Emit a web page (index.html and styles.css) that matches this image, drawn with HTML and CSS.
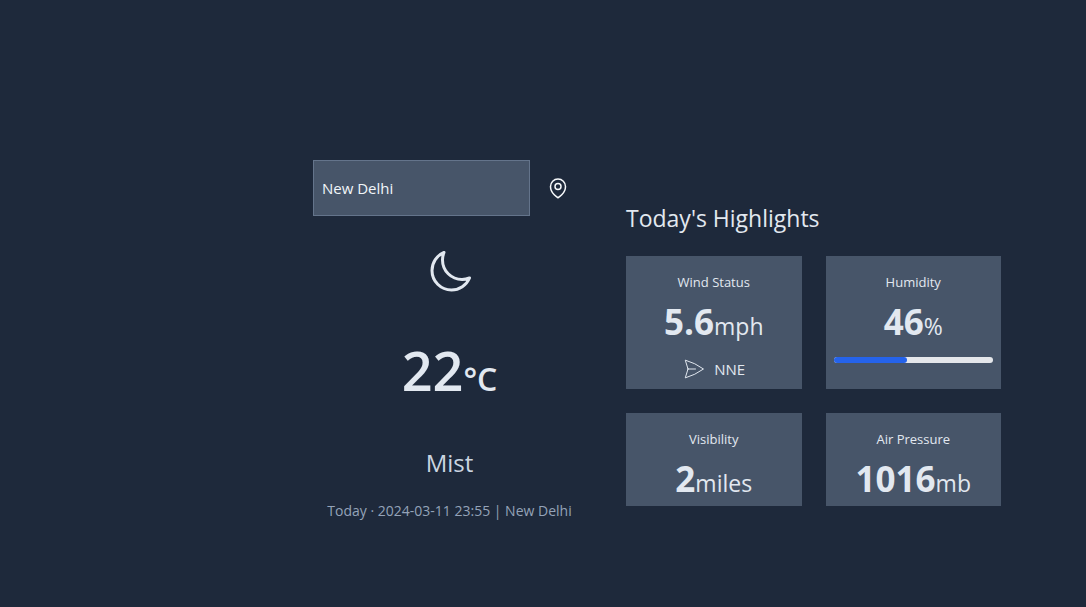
FILE: index.html
```html
<!DOCTYPE html>
<html lang="en">
<head>
<meta charset="utf-8">
<meta name="viewport" content="width=device-width, initial-scale=1">
<title>Weather</title>
<link rel="stylesheet" href="styles.css">
</head>
<body>
<main class="weather">
  <section class="current">
    <form class="search">
      <input class="search-input" type="text" aria-label="City" value="New Delhi">
      <button class="locate" type="button" aria-label="Use my location">
        <svg class="icon" viewBox="0 0 24 24" stroke-width="1.5"><path d="M15 10.5a3 3 0 1 1-6 0 3 3 0 0 1 6 0Z"/><path d="M19.5 10.5c0 7.142-7.5 11.25-7.5 11.25S4.5 17.642 4.5 10.5a7.5 7.5 0 1 1 15 0Z"/></svg>
      </button>
    </form>
    <svg class="icon icon-large" viewBox="0 0 24 24" stroke-width="1.5"><path d="M21.752 15.002A9.72 9.72 0 0 1 18 15.75c-5.385 0-9.75-4.365-9.75-9.75 0-1.33.266-2.597.748-3.752A9.753 9.753 0 0 0 3 11.25C3 16.635 7.365 21 12.75 21a9.753 9.753 0 0 0 9.002-5.998Z"/></svg>
    <p class="temperature">22<span class="degree">°C</span></p>
    <p class="condition">Mist</p>
    <p class="date">Today · 2024-03-11 23:55 | New Delhi</p>
  </section>
  <section class="highlights">
    <h1 class="title">Today's Highlights</h1>
    <div class="cards">
      <article class="card">
        <h2 class="label">Wind Status</h2>
        <p class="value">5.6<span class="unit">mph</span></p>
        <p class="wind">
          <svg class="icon" viewBox="0 0 24 24" stroke-width="1"><path d="M6 12 3.269 3.125A59.769 59.769 0 0 1 21.485 12 59.768 59.768 0 0 1 3.27 20.875L5.999 12Zm0 0h7.5"/></svg>
          <span>NNE</span>
        </p>
      </article>
      <article class="card">
        <h2 class="label">Humidity</h2>
        <p class="value">46<span class="unit">%</span></p>
        <div class="meter"><div class="meter-fill" style="width: 46%"></div></div>
      </article>
      <article class="card">
        <h2 class="label">Visibility</h2>
        <p class="value">2<span class="unit">miles</span></p>
      </article>
      <article class="card">
        <h2 class="label">Air Pressure</h2>
        <p class="value">1016<span class="unit">mb</span></p>
      </article>
    </div>
  </section>
</main>
</body>
</html>
```
FILE: styles.css
```css
* {
  box-sizing: border-box;
  margin: 0;
}

body {
  min-height: 100vh;
  background: #1e293b;
  color: #e2e8f0;
  font: 400 15px/24px "Segoe UI", "Open Sans", "Noto Sans", sans-serif;
}

.weather {
  display: grid;
  grid-template-columns: 273fr 375fr;
  column-gap: 40px;
  padding: 160px 85px 40px 313px;
}

.current {
  display: flex;
  flex-direction: column;
  align-items: center;
  text-align: center;
}

.search {
  display: flex;
  width: 100%;
}

.search-input {
  flex: 1;
  min-width: 0;
  height: 56px;
  padding: 8px;
  border: 1px solid #64748b;
  border-radius: 0;
  background: #475569;
  color: #f1f5f9;
  font: inherit;
}

.locate {
  display: grid;
  padding: 16px;
  border: 0;
  background: none;
  color: #f8fafc;
}

.icon {
  width: 24px;
  height: 24px;
  fill: none;
  stroke: currentColor;
  stroke-linecap: round;
  stroke-linejoin: round;
}

.icon-large {
  width: 48px;
  height: 48px;
  margin-top: 32px;
}

.temperature {
  margin-top: 38px;
  font-size: 54px;
  font-weight: 600;
  line-height: 72px;
}

.degree {
  font-size: 32px;
  line-height: 1;
}

.condition {
  margin-top: 41px;
  color: #cbd5e1;
  font-size: 24px;
  line-height: 32px;
}

.date {
  margin-top: 20px;
  color: #94a3b8;
  font-size: 14px;
  white-space: nowrap;
}

.highlights {
  padding-top: 40px;
}

.title {
  font-size: 23px;
  font-weight: 400;
  line-height: 36px;
}

.cards {
  display: grid;
  grid-template-columns: 1fr 1fr;
  gap: 24px;
  margin-top: 20px;
}

.card {
  padding: 16px 8px 6px;
  background: #475569;
  text-align: center;
}

.label {
  font-size: 13px;
  font-weight: 400;
  line-height: 20px;
}

.value {
  margin-top: 8px;
  font-size: 35px;
  font-weight: 700;
  line-height: 43px;
}

.unit {
  font-size: 23px;
  font-weight: 400;
  line-height: 1;
}

.wind {
  display: flex;
  justify-content: center;
  align-items: center;
  gap: 8px;
  margin: 14px 0 2px;
}

.meter {
  height: 6px;
  margin-top: 14px;
  border-radius: 3px;
  background: #e5e7eb;
}

.meter-fill {
  height: 100%;
  border-radius: 3px;
  background: #2563eb;
}
```
